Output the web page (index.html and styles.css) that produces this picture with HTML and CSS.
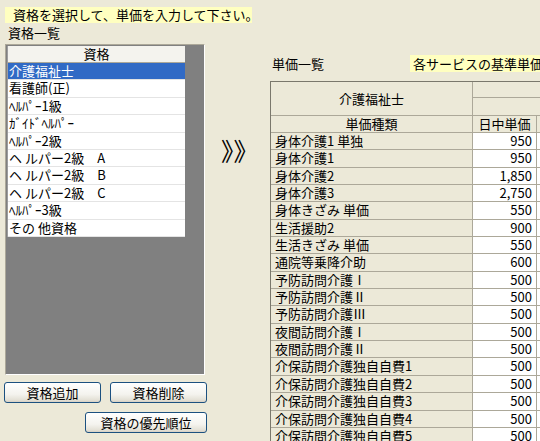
FILE: index.html
```html
<!DOCTYPE html>
<html lang="ja">
<head>
<meta charset="utf-8">
<title>単価設定</title>
<link rel="stylesheet" href="styles.css">
</head>
<body>
<div class="page">
  <div class="note">資格を選択して、単価を入力して下さい。</div>
  <div class="caption">資格一覧</div>
  <div class="main">
    <div class="left">
      <div class="panel">
        <div class="list">
          <div class="list-head">資格</div>
          <div class="list-row sel">介護福祉士</div>
          <div class="list-row">看護師(正)</div>
          <div class="list-row">ﾍﾙﾊﾟｰ1級</div>
          <div class="list-row">ｶﾞｲﾄﾞﾍﾙﾊﾟｰ</div>
          <div class="list-row">ﾍﾙﾊﾟｰ2級</div>
          <div class="list-row">ヘ ルパー2級　A</div>
          <div class="list-row">ヘ ルパー2級　B</div>
          <div class="list-row">ヘ ルパー2級　C</div>
          <div class="list-row">ﾍﾙﾊﾟｰ3級</div>
          <div class="list-row">その 他資格</div>
        </div>
      </div>
      <div class="btns">
        <button class="btn">資格追加</button>
        <button class="btn">資格削除</button>
      </div>
      <button class="btn btn-wide">資格の優先順位</button>
    </div>
    <div class="arrow">》》</div>
    <div class="right">
      <div class="title-row">
        <div class="title">単価一覧</div>
        <div class="std">各サービスの基準単価</div>
      </div>
      <div class="table">
        <div class="cell head span2">介護福祉士</div>
        <div class="cell head wide"></div>
        <div class="cell head wide"></div>
        <div class="cell head center">単価種類</div>
        <div class="cell head center">日中単価</div>
        <div class="cell head"></div>

        <div class="cell label">身体介護1 単独</div><div class="cell val">950</div><div class="cell blank"></div>
        <div class="cell label">身体介護1</div><div class="cell val">950</div><div class="cell blank"></div>
        <div class="cell label">身体介護2</div><div class="cell val">1,850</div><div class="cell blank"></div>
        <div class="cell label">身体介護3</div><div class="cell val">2,750</div><div class="cell blank"></div>
        <div class="cell label">身体きざみ 単価</div><div class="cell val">550</div><div class="cell blank"></div>
        <div class="cell label">生活援助2</div><div class="cell val">900</div><div class="cell blank"></div>
        <div class="cell label">生活きざみ 単価</div><div class="cell val">550</div><div class="cell blank"></div>
        <div class="cell label">通院等乗降介助</div><div class="cell val">600</div><div class="cell blank"></div>
        <div class="cell label">予防訪問介護Ⅰ</div><div class="cell val">500</div><div class="cell blank"></div>
        <div class="cell label">予防訪問介護Ⅱ</div><div class="cell val">500</div><div class="cell blank"></div>
        <div class="cell label">予防訪問介護Ⅲ</div><div class="cell val">500</div><div class="cell blank"></div>
        <div class="cell label">夜間訪問介護Ⅰ</div><div class="cell val">500</div><div class="cell blank"></div>
        <div class="cell label">夜間訪問介護Ⅱ</div><div class="cell val">500</div><div class="cell blank"></div>
        <div class="cell label">介保訪問介護独自自費1</div><div class="cell val">500</div><div class="cell blank"></div>
        <div class="cell label">介保訪問介護独自自費2</div><div class="cell val">500</div><div class="cell blank"></div>
        <div class="cell label">介保訪問介護独自自費3</div><div class="cell val">500</div><div class="cell blank"></div>
        <div class="cell label">介保訪問介護独自自費4</div><div class="cell val">500</div><div class="cell blank"></div>
        <div class="cell label">介保訪問介護独自自費5</div><div class="cell val">500</div><div class="cell blank"></div>
      </div>
    </div>
  </div>
</div>
</body>
</html>
```
FILE: styles.css
```css
* { box-sizing: border-box; margin: 0; padding: 0; }
html, body { width: 540px; height: 441px; overflow: hidden; }
body {
  background: #ECE9D8;
  font-family: "Noto Sans CJK JP", "Liberation Sans", sans-serif;
  font-size: 13px;
  color: #000;
  line-height: 1;
}
.page { padding-top: 7px; }
.note {
  margin-left: 5px;
  width: 247px;
  height: 16px;
  line-height: 16px;
  padding-left: 8px;
  background: #FFFFC0;
  white-space: nowrap;
}
.caption { margin-left: 8px; height: 21px; line-height: 20px; }
.main { display: flex; align-items: flex-start; }

.left { width: 207px; padding-left: 4px; flex: none; }
.panel {
  margin-left: 1px;
  width: 200px;
  height: 331px;
  border: 1px solid;
  border-color: #ACA899 #FFFFFF #FFFFFF #ACA899;
  background: #808080;
  padding: 1px 0 0 1px;
}
.list { width: 178px; background: #FFFFFF; border-left: 1px solid #9D9D9D; }
.list-head {
  height: 17px;
  line-height: 16px;
  text-align: center;
  background: #F4F3EE;
  border-bottom: 1px solid #ACA899;
}
.list-row {
  height: 17.4px;
  line-height: 16.4px;
  padding-left: 1px;
  border-bottom: 1px solid #E4E4E4;
  white-space: nowrap;
}
.list-row.sel { background: #316AC5; color: #FFFFFF; }

.btns { display: flex; gap: 9px; margin-top: 7px; }
.btn {
  display: block;
  width: 97px;
  height: 21px;
  border: 1px solid #1C5180;
  border-radius: 3px;
  background: linear-gradient(#FFFFFF, #F4F3EE 60%, #E3E0D5 90%, #D6D0C5);
  font-family: inherit;
  font-size: 13px;
  line-height: 18px;
  color: #000;
  text-align: center;
}
.btn-wide { width: 122px; margin: 9px 0 0 81px; }

.arrow {
  flex: none;
  width: 63px;
  padding: 91px 0 0 14px;
  font-size: 25px;
  line-height: 30px;
  white-space: nowrap;
}

.right { flex: none; width: 340px; }
.title-row { display: flex; margin-top: 11px; height: 17px; line-height: 17px; }
.title { margin-left: 2px; width: 138px; }
.std { background: #FFFFC0; padding-left: 3px; white-space: nowrap; }

.table {
  margin-top: 9px;
  display: grid;
  grid-template-columns: 202px 64px 64px;
  grid-template-rows: 16px 18px 17px repeat(18, 17.35px);
  border-top: 1px solid #7A786C;
  border-left: 1px solid #7A786C;
  width: 331px;
}
.cell {
  border-right: 1px solid #ACA899;
  border-bottom: 1px solid #ACA899;
  white-space: nowrap;
  line-height: 16px;
}
.head { background: #ECE9D8; text-align: center; }
.span2 { grid-row: 1 / 3; grid-column: 1; display: flex; align-items: center; justify-content: center; }
.wide { grid-column: 2 / 4; }
.center { text-align: center; }
.label { background: #ECE9D8; padding-left: 4px; }
.val { background: #FFFFFF; text-align: right; padding-right: 4px; }
.blank { background: #FFFFFF; }
```
